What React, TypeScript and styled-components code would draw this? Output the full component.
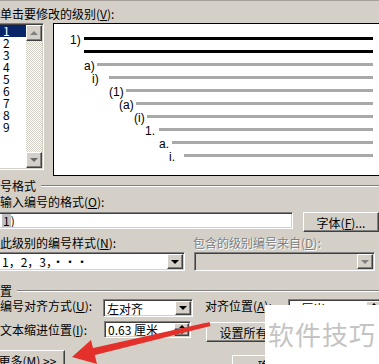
import React from 'react';
import styled, { createGlobalStyle, css } from 'styled-components';

const GlobalStyle = createGlobalStyle`
  html, body {
    margin: 0;
    padding: 0;
    background: #d4d0c8;
  }
  body {
    font-family: "Noto Sans CJK SC", "Liberation Sans", sans-serif;
    font-size: 12px;
    color: #000;
  }
`;

const raised = css`
  border: 1px solid;
  border-color: #ffffff #404040 #404040 #ffffff;
  box-shadow: inset -1px -1px 0 #808080;
`;

const sunken = css`
  border: 1px solid;
  border-color: #808080 #ffffff #ffffff #808080;
  box-shadow: inset 1px 1px 0 #404040, inset -1px -1px 0 #d4d0c8;
`;

const Dialog = styled.div`
  position: relative;
  width: 379px;
  height: 364px;
  overflow: hidden;
  box-sizing: border-box;
  border-top: 1px solid #a6a29a;
  background: #d4d0c8;
  display: flex;
  flex-direction: column;
`;

const Text = styled.div<{ $gap?: number; $disabled?: boolean }>`
  flex: none;
  margin-top: ${(p) => p.$gap ?? 0}px;
  height: 13px;
  line-height: 13px;
  white-space: nowrap;
  color: ${(p) => (p.$disabled ? '#808080' : '#000')};
  text-shadow: ${(p) => (p.$disabled ? '1px 1px 0 #fff' : 'none')};
`;

const LevelRow = styled.div`
  flex: none;
  display: flex;
  align-items: flex-start;
  margin-top: 3px;
  height: 153px;
`;

const ListBox = styled.div`
  ${sunken};
  box-sizing: border-box;
  flex: none;
  width: 46px;
  height: 147px;
  margin-left: -2px;
  padding: 1px;
  background: #fff;
  display: flex;
`;

const Items = styled.div`
  width: 26px;
  display: flex;
  flex-direction: column;
`;

const Item = styled.div<{ $selected?: boolean }>`
  height: 12px;
  line-height: 12px;
  padding-left: 3px;
  background: ${(p) => (p.$selected ? '#0a246a' : 'transparent')};
  color: ${(p) => (p.$selected ? '#fff' : '#000')};
`;

const ScrollBar = styled.div`
  width: 16px;
  display: flex;
  flex-direction: column;
`;

const ScrollButton = styled.div`
  ${raised};
  box-sizing: border-box;
  width: 16px;
  height: 16px;
  background: #d4d0c8;
  display: flex;
  align-items: center;
  justify-content: center;
`;

const Track = styled.div`
  flex: 1;
  background-color: #fff;
  background-image: conic-gradient(#d4d0c8 25%, #fff 0 50%, #d4d0c8 0 75%, #fff 0);
  background-size: 2px 2px;
`;

const Triangle = styled.span<{ $dir: 'up' | 'down'; $size?: number; $color?: string }>`
  width: 0;
  height: 0;
  border-left: ${(p) => p.$size ?? 4}px solid transparent;
  border-right: ${(p) => p.$size ?? 4}px solid transparent;
  ${(p) =>
    p.$dir === 'up'
      ? `border-bottom: ${p.$size ?? 4}px solid ${p.$color ?? '#000'};`
      : `border-top: ${p.$size ?? 4}px solid ${p.$color ?? '#000'};`}
`;

const Preview = styled.div`
  box-sizing: border-box;
  flex: none;
  width: 332px;
  height: 153px;
  margin-left: 9px;
  border: 1px solid #000;
  background: #fff;
  padding: 8px 11px 0 0;
`;

const PreviewRow = styled.div<{ $indent: number }>`
  display: flex;
  align-items: center;
  height: 13px;
  padding-left: ${(p) => p.$indent}px;
`;

const PreviewLabel = styled.span<{ $width: number }>`
  flex: none;
  width: ${(p) => p.$width}px;
  padding-top: 3px;
  font-family: "Liberation Sans", Arial, sans-serif;
  font-size: 12px;
  line-height: 13px;
  white-space: nowrap;
`;

const PreviewLine = styled.div<{ $dark?: boolean }>`
  flex: 1;
  height: 3px;
  background: ${(p) => (p.$dark ? '#000' : '#a9a9a9')};
`;

const Group = styled.div<{ $gap: number }>`
  flex: none;
  display: flex;
  align-items: center;
  gap: 5px;
  margin-top: ${(p) => p.$gap}px;
  height: 13px;
  line-height: 13px;
  white-space: nowrap;
`;

const Etched = styled.div`
  flex: 1;
  height: 0;
  border-top: 1px solid #808080;
  border-bottom: 1px solid #fff;
`;

const FormRow = styled.div<{ $gap: number }>`
  flex: none;
  display: flex;
  align-items: flex-start;
  margin-top: ${(p) => p.$gap}px;
`;

const RowLabel = styled.div<{ $width: number; $height?: number; $shift?: number; $disabled?: boolean }>`
  flex: none;
  width: ${(p) => p.$width}px;
  height: ${(p) => p.$height ?? 13}px;
  margin-left: ${(p) => p.$shift ?? 0}px;
  line-height: ${(p) => p.$height ?? 13}px;
  white-space: nowrap;
  color: ${(p) => (p.$disabled ? '#808080' : '#000')};
  text-shadow: ${(p) => (p.$disabled ? '1px 1px 0 #fff' : 'none')};
`;

const Field = styled.div<{ $width: number; $height: number; $shift?: number; $top?: number; $disabled?: boolean }>`
  ${sunken};
  box-sizing: border-box;
  flex: none;
  width: ${(p) => p.$width}px;
  height: ${(p) => p.$height}px;
  margin-left: ${(p) => p.$shift ?? 0}px;
  margin-top: ${(p) => p.$top ?? 0}px;
  padding: 1px;
  background: ${(p) => (p.$disabled ? '#d4d0c8' : '#fff')};
  display: flex;
`;

const FieldText = styled.div`
  flex: 1;
  padding-left: 2px;
  white-space: nowrap;
  overflow: hidden;
  display: flex;
  align-items: center;
`;

const Shaded = styled.span`
  background: #c0c0c0;
  padding: 0 1px;
`;

const DropButton = styled.div`
  ${raised};
  box-sizing: border-box;
  width: 16px;
  background: #d4d0c8;
  display: flex;
  align-items: center;
  justify-content: center;
`;

const SpinButtons = styled.div`
  width: 15px;
  display: flex;
  flex-direction: column;
`;

const SpinButton = styled.div`
  ${raised};
  box-sizing: border-box;
  flex: 1;
  background: #d4d0c8;
  display: flex;
  align-items: center;
  justify-content: center;
`;

const Button = styled.div<{ $width: number; $shift?: number; $top?: number }>`
  ${raised};
  box-sizing: border-box;
  flex: none;
  width: ${(p) => p.$width}px;
  height: 20px;
  margin-left: ${(p) => p.$shift ?? 0}px;
  margin-top: ${(p) => p.$top ?? 0}px;
  background: #d4d0c8;
  display: flex;
  align-items: center;
  justify-content: center;
  white-space: nowrap;
  line-height: 13px;
`;

const Watermark = styled.div`
  position: absolute;
  left: 265px;
  top: 304px;
  right: 0;
  bottom: 0;
  background: #fff;
  padding: 15px 0 0 3px;
  font-size: 26px;
  line-height: 27px;
  letter-spacing: 1px;
  color: #c4c4c4;
  white-space: nowrap;
`;

const ArrowLayer = styled.svg`
  position: absolute;
  left: 0;
  top: -1px;
  pointer-events: none;
`;

const levels = ['1', '2', '3', '4', '5', '6', '7', '8', '9'];

const previewRows = [
  { label: '1)', indent: 16, width: 14, dark: true },
  { label: '', indent: 30, width: 0, dark: true },
  { label: 'a)', indent: 30, width: 13 },
  { label: 'i)', indent: 38, width: 17 },
  { label: '(1)', indent: 55, width: 17 },
  { label: '(a)', indent: 65, width: 17 },
  { label: '(i)', indent: 80, width: 13 },
  { label: '1.', indent: 91, width: 14 },
  { label: 'a.', indent: 105, width: 13 },
  { label: 'i.', indent: 115, width: 15 },
];

function Spinner() {
  return (
    <SpinButtons>
      <SpinButton>
        <Triangle $dir="up" $size={3} />
      </SpinButton>
      <SpinButton>
        <Triangle $dir="down" $size={3} />
      </SpinButton>
    </SpinButtons>
  );
}

export default function App() {
  return (
    <Dialog>
      <GlobalStyle />
      <Text $gap={6}>
        单击要修改的级别(<u>V</u>):
      </Text>

      <LevelRow>
        <ListBox>
          <Items>
            {levels.map((l) => (
              <Item key={l} $selected={l === '1'}>
                {l}
              </Item>
            ))}
          </Items>
          <ScrollBar>
            <ScrollButton>
              <Triangle $dir="up" $color="#808080" />
            </ScrollButton>
            <Track />
            <ScrollButton>
              <Triangle $dir="down" $color="#6a6a6a" />
            </ScrollButton>
          </ScrollBar>
        </ListBox>
        <Preview>
          {previewRows.map((r, i) => (
            <PreviewRow key={i} $indent={r.indent}>
              {r.label ? <PreviewLabel $width={r.width}>{r.label}</PreviewLabel> : null}
              <PreviewLine $dark={r.dark} />
            </PreviewRow>
          ))}
        </Preview>
      </LevelRow>

      <Group $gap={3}>
        号格式
        <Etched />
      </Group>
      <Text $gap={3}>
        输入编号的格式(<u>O</u>):
      </Text>
      <FormRow $gap={4}>
        <Field $width={295} $height={17} $shift={-2}>
          <FieldText>
            <Shaded>1</Shaded>)
          </FieldText>
        </Field>
        <Button $width={76} $shift={10}>
          字体(<u>F</u>)...
        </Button>
      </FormRow>

      <FormRow $gap={4}>
        <RowLabel $width={193}>
          此级别的编号样式(<u>N</u>):
        </RowLabel>
        <RowLabel $width={180} $disabled>
          包含的级别编号来自(<u>D</u>):
        </RowLabel>
      </FormRow>
      <FormRow $gap={3}>
        <Field $width={187} $height={19} $shift={-2}>
          <FieldText>1，2，3，···</FieldText>
          <DropButton>
            <Triangle $dir="down" />
          </DropButton>
        </Field>
        <Field $width={181} $height={19} $shift={9} $disabled>
          <FieldText />
          <DropButton>
            <Triangle $dir="down" $color="#808080" />
          </DropButton>
        </Field>
      </FormRow>

      <Group $gap={13}>
        置
        <Etched />
      </Group>
      <FormRow $gap={2}>
        <RowLabel $width={103}>
          编号对齐方式(<u>U</u>):
        </RowLabel>
        <Field $width={90} $height={18}>
          <FieldText>左对齐</FieldText>
          <DropButton>
            <Triangle $dir="down" />
          </DropButton>
        </Field>
        <RowLabel $width={83} $shift={12}>
          对齐位置(<u>A</u>):
        </RowLabel>
        <Field $width={95} $height={18}>
          <FieldText>0 厘米</FieldText>
          <Spinner />
        </Field>
      </FormRow>
      <FormRow $gap={4}>
        <RowLabel $width={104} $height={17}>
          文本缩进位置(<u>I</u>):
        </RowLabel>
        <Field $width={87} $height={17}>
          <FieldText>0.63 厘米</FieldText>
          <Spinner />
        </Field>
        <Button $width={124} $shift={15} $top={1}>
          设置所有级别(<u>E</u>)...
        </Button>
      </FormRow>
      <FormRow $gap={8}>
        <Button $width={75} $shift={-10}>
          更多(<u>M</u>) &gt;&gt;
        </Button>
        <Button $width={75} $shift={167} $top={5}>
          确定
        </Button>
      </FormRow>

      <Watermark>软件技巧</Watermark>

      <ArrowLayer width="379" height="364" viewBox="0 0 379 364">
        <polygon
          points="210.5,325.9 209.5,322.1 91,348.6 93,355.4"
          fill="#e3302a"
        />
        <polygon points="72,357 91,340 97,364" fill="#e3302a" />
      </ArrowLayer>
    </Dialog>
  );
}
